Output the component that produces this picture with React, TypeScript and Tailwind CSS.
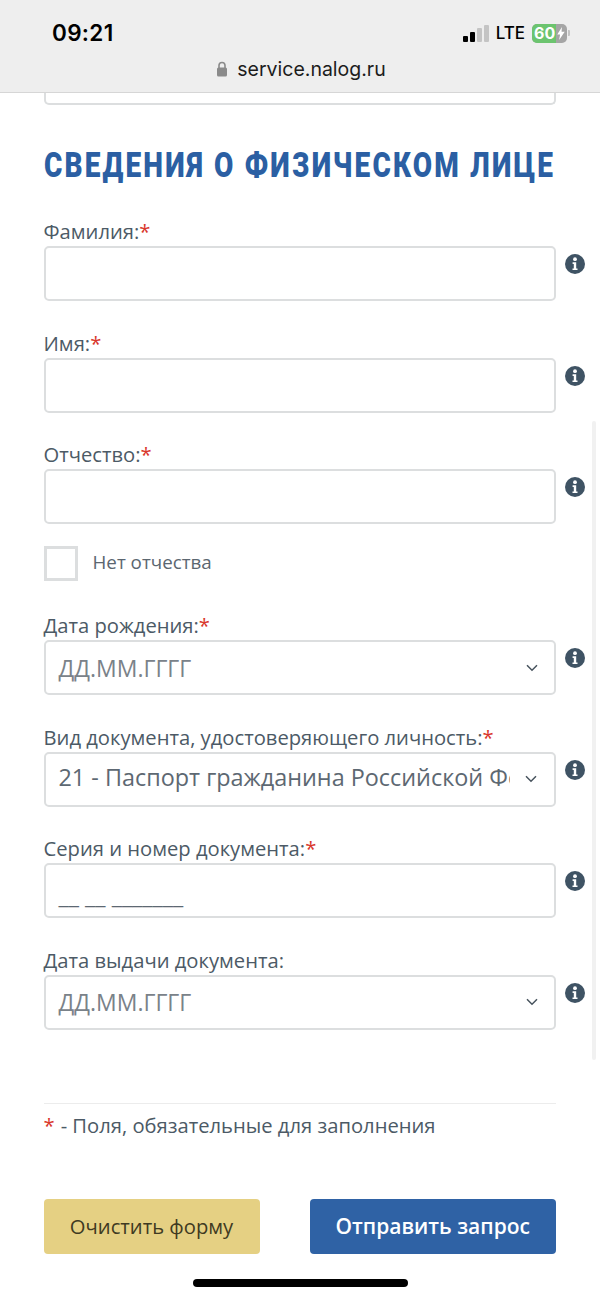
import React from "react";

const sans = "font-['Open_Sans',sans-serif]";

function Info() {
  return (
    <svg viewBox="0 0 20 20" className="w-5 h-5 shrink-0 mt-2" aria-hidden>
      <circle cx="10" cy="10" r="10" fill="#3f5364" />
      <circle cx="10" cy="5.2" r="1.9" fill="#fff" />
      <path d="M7.6 8.3h3.6v6.2h1.3v1.6H7.5v-1.6h1.3V9.9H7.6z" fill="#fff" />
    </svg>
  );
}

function Chevron() {
  return (
    <svg viewBox="0 0 12 8" className="w-[12px] h-[8px] shrink-0" fill="none" stroke="#47535d" strokeWidth="1.5" aria-hidden>
      <path d="M1 1.2l5 5 5-5" />
    </svg>
  );
}

function Field({ label, required = true, children, className = "" }: { label: string; required?: boolean; children?: React.ReactNode; className?: string }) {
  return (
    <div className={className}>
      <div className="h-[30px] text-[20.2px] leading-[30px] text-[#4c5a66] whitespace-nowrap">
        {label}
        {required && <span className="text-[#d9362b]">*</span>}
      </div>
      <div className="flex gap-[9px] w-[541.5px]">
        <div className="w-[512.5px] shrink-0 h-[55px] border-2 border-[#dcdedf] rounded-[5px] bg-white flex items-center pl-[13px] pr-[16px] text-[23.4px] text-[#5d6872]">
          {children}
        </div>
        <Info />
      </div>
    </div>
  );
}

function DateValue() {
  return (
    <>
      <span className="flex-1 text-[23px] text-[#7a8289]">ДД.ММ.ГГГГ</span>
      <Chevron />
    </>
  );
}

export default function App() {
  return (
    <div className={`relative w-[600px] h-[1298px] bg-white overflow-hidden ${sans}`}>
      <header className="h-[93px] bg-[#eeeeee] border-b border-[#d6d6d6] flex flex-col">
        <div className="h-[55px] pt-[19px] pl-[52px] pr-[30px] flex items-start justify-between">
          <span className="font-['Inter',sans-serif] text-[22.5px] leading-[28px] font-semibold text-black tracking-[0.3px]">09:21</span>
          <div className="flex items-center gap-[6px] h-[28px]">
            <div className="flex items-end gap-[2px] h-[17px]">
              <span className="w-[5px] h-[6px] rounded-[1px] bg-black" />
              <span className="w-[5px] h-[10px] rounded-[1px] bg-black" />
              <span className="w-[5px] h-[14px] rounded-[1px] bg-[#c4c4c4]" />
              <span className="w-[5px] h-[17px] rounded-[1px] bg-[#c4c4c4]" />
            </div>
            <span className="font-['Inter',sans-serif] text-[17px] font-medium text-black ml-[1px] translate-y-[1px]">LTE</span>
            <div className="flex items-center ml-[1px]">
              <div className="relative flex w-[35px] h-[19px] rounded-[5px] overflow-hidden bg-[#a5a5a5]">
                <span className="w-[24px] bg-[#6cc46f]" />
                <span className="absolute inset-0 pl-[2px] font-['Inter',sans-serif] text-[16px] leading-[19px] font-bold text-white">60</span>
                <svg viewBox="0 0 8 14" className="absolute right-[2px] top-[3px] w-[8px] h-[13px]" aria-hidden>
                  <path d="M5 0L0 8h3l-1 6 6-9H4.6z" fill="#fff" />
                </svg>
              </div>
              <span className="w-[2px] h-[6px] ml-[1px] rounded-r-[1px] bg-[#c4c4c4]" />
            </div>
          </div>
        </div>
        <div className="flex items-center justify-center gap-[9px] font-['Inter',sans-serif] text-[19.5px] leading-[28px] text-[#1c1c1c] pl-[2px]">
          <svg viewBox="0 0 12 16" className="w-[12px] h-[16px]" aria-hidden>
            <path d="M3 7V4.5a3 3 0 016 0V7" fill="none" stroke="#8a8a8a" strokeWidth="1.6" />
            <rect x="1" y="6.5" width="10" height="9" rx="1.5" fill="#8a8a8a" />
          </svg>
          <span>service.nalog.ru</span>
        </div>
      </header>

      <main className="pl-[43.5px] pr-[44px]">
        <div className="h-[12px] border-2 border-t-0 border-[#dcdedf] rounded-b-[5px]" />

        <h1 className="mt-[43px] h-[36px] w-max font-['Roboto',sans-serif] text-[35px] leading-[36px] font-black tracking-[2.7px] text-[#2b5fa3] whitespace-nowrap origin-left scale-x-[0.8]">
          СВЕДЕНИЯ О ФИЗИЧЕСКОМ ЛИЦЕ
        </h1>

        <Field label="Фамилия:" className="mt-[32px]" />
        <Field label="Имя:" className="mt-[26.7px]" />
        <Field label="Отчество:" className="mt-[26.7px]" />

        <label className="mt-[22px] flex items-center gap-[15px]">
          <span className="w-[34px] h-[35px] border-[3px] border-[#dcdedf] bg-white" />
          <span className="text-[18.8px] text-[#5b6670] -translate-y-[2px]">Нет отчества</span>
        </label>

        <Field label="Дата рождения:" className="mt-[29px]">
          <DateValue />
        </Field>
        <Field label="Вид документа, удостоверяющего личность:" className="mt-[26.5px]">
          <span className="w-[451px] shrink-0 overflow-hidden whitespace-nowrap mr-[15px] pb-[3px]">21 - Паспорт гражданина Российской Федерации</span>
          <Chevron />
        </Field>
        <Field label="Серия и номер документа:" className="mt-[26.5px]">
          <span className="text-[#5d6872] leading-none pt-[10px] whitespace-nowrap">__ __ _______</span>
        </Field>
        <Field label="Дата выдачи документа:" required={false} className="mt-[26.5px]">
          <DateValue />
        </Field>

        <div className="mt-[73.5px] border-t border-[#ececec] pt-[6px] text-[20.2px] leading-[30px] text-[#4c5a66]">
          <span className="text-[#d9362b] mr-[6px]">*</span>- Поля, обязательные для заполнения
        </div>

        <div className="mt-[59px] flex justify-between">
          <button className="w-[216px] h-[55px] rounded-[4px] bg-[#e5d083] text-[20.2px] text-[#3f3a22] pb-[1px]">Очистить форму</button>
          <button className="w-[246.5px] h-[55px] rounded-[4px] bg-[#2f62a5] text-[21px] font-semibold text-white">Отправить запрос</button>
        </div>
      </main>

      <div className="absolute left-[592px] top-[421px] w-[4px] h-[639px] rounded-full bg-[#f1f1f1]" />
      <div className="absolute left-[193px] top-[1279px] w-[215px] h-[8px] rounded-full bg-black" />
    </div>
  );
}
